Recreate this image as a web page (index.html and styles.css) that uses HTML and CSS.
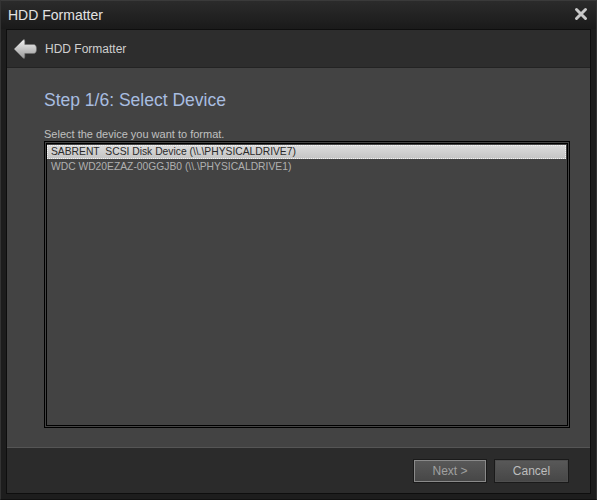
FILE: index.html
```html
<!DOCTYPE html>
<html>
<head>
<meta charset="utf-8">
<link rel="stylesheet" href="styles.css">
</head>
<body>
<div class="window">
  <div class="titlebar">
    <span class="title">HDD Formatter</span>
    <svg class="close" width="16" height="16" viewBox="0 0 16 16">
      <path d="M3.5 3.5 L12.5 12.5 M12.5 3.5 L3.5 12.5" stroke="#c8c8c8" stroke-width="3" stroke-linecap="round"/>
    </svg>
  </div>
  <div class="panel">
    <div class="header">
      <svg class="back" width="26" height="24" viewBox="0 0 26 24">
        <defs>
          <linearGradient id="ag" x1="0" y1="0" x2="0" y2="1">
            <stop offset="0" stop-color="#f2f2f2"/>
            <stop offset="1" stop-color="#999"/>
          </linearGradient>
        </defs>
        <path d="M2 12 L11 3 Q12.8 1.6 12.8 4.2 L12.8 7.5 L21.5 7.5 Q24.5 7.5 24.5 12 Q24.5 16.5 21.5 16.5 L12.8 16.5 L12.8 19.8 Q12.8 22.4 11 21 Z" fill="url(#ag)" stroke="#6e6e6e" stroke-width="0.6" stroke-linejoin="round"/>
      </svg>
      <span class="header-title">HDD Formatter</span>
    </div>
    <div class="content">
      <h1 class="step">Step 1/6: Select Device</h1>
      <div class="label">Select the device you want to format.</div>
      <div class="listbox">
        <div class="item selected">SABRENT&nbsp; SCSI Disk Device (\\.\PHYSICALDRIVE7)</div>
        <div class="item">WDC WD20EZAZ-00GGJB0 (\\.\PHYSICALDRIVE1)</div>
      </div>
    </div>
    <div class="footer">
      <button class="btn btn-default">Next &gt;</button>
      <button class="btn">Cancel</button>
    </div>
  </div>
</div>
</body>
</html>
```

FILE: styles.css
```css
html, body {
  margin: 0;
  padding: 0;
  background: #1c1c1c;
}
.window {
  width: 597px;
  height: 500px;
  box-sizing: border-box;
  background: #1d1d1d;
  border-left: 1px solid #333;
  border-right: 1px solid #333;
  border-top: 1px solid #3a3a3a;
  border-bottom: 1px solid #111;
  display: flex;
  flex-direction: column;
  font-family: "Liberation Sans", Arial, sans-serif;
}
.titlebar {
  height: 28px;
  flex: none;
  display: flex;
  align-items: center;
  justify-content: space-between;
  padding: 0 7px 0 7px;
  background: linear-gradient(#2b2b2b, #1a1a1a);
}
.title {
  color: #e2e2e2;
  font-size: 14px;
  margin-top: -1px;
}
.close {
  display: block;
  margin-top: -2px;
}
.panel {
  flex: 1;
  margin: 0 5px 5px 5px;
  border: 1px solid #0e0e0e;
  display: flex;
  flex-direction: column;
  background: #2b2b2b;
}
.header {
  height: 37px;
  flex: none;
  display: flex;
  align-items: center;
  padding-left: 5px;
  background: #2d2d2d;
  border-bottom: 1px solid #232323;
}
.back {
  display: block;
  margin-top: 1px;
}
.header-title {
  color: #cfcfcf;
  font-size: 12px;
  margin-left: 7px;
  margin-top: 1px;
}
.content {
  flex: 1;
  background: #434343;
  padding: 22px 0 0 37px;
  border-bottom: 1px solid #555;
}
.step {
  margin: 0;
  font-weight: normal;
  font-size: 17.5px;
  line-height: 20px;
  color: #a8bde0;
}
.label {
  margin-top: 18px;
  font-size: 11px;
  line-height: 13px;
  color: #c0c0c0;
}
.listbox {
  width: 526px;
  height: 287px;
  box-sizing: border-box;
  border: 3px double #000;
  padding: 1px 0 0 0;
}
.item {
  height: 14px;
  line-height: 14px;
  font-size: 10.3px;
  color: #b0b0b0;
  padding-left: 4px;
  margin: 0 1px 1px 0;
  box-sizing: border-box;
}
.item.selected {
  background: linear-gradient(#dcdcdc, #c4c4c4);
  color: #2a2a2a;
  outline: 1px dotted #f4f4f4;
  outline-offset: -1px;
}
.footer {
  height: 45px;
  flex: none;
  background: #2b2b2b;
  display: flex;
  justify-content: flex-end;
  align-items: flex-start;
  gap: 7px;
  padding: 11px 21px 0 0;
  box-sizing: border-box;
}
.btn {
  width: 75px;
  height: 24px;
  box-sizing: border-box;
  border: 1px solid #1a1a1a;
  background: linear-gradient(#595959, #464646);
  color: #bdbdbd;
  font-family: "Liberation Sans", Arial, sans-serif;
  font-size: 12px;
  padding: 0;
  box-shadow: inset 0 0 0 1px #4e4e4e;
}
.btn-default {
  width: 74px;
  color: #a0a0a0;
  box-shadow: inset 0 0 0 1px #8a8a8a;
}
```
